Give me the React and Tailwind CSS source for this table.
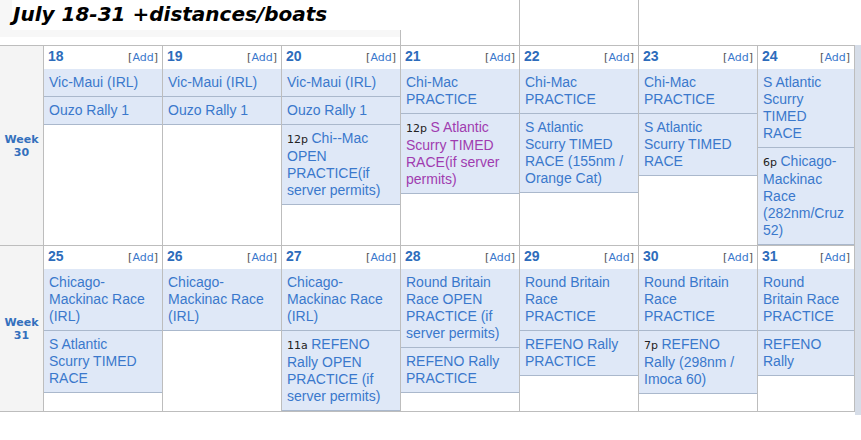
import React from "react";

const weeks = [
  {
    label: "30",
    days: [
      { d: "18", ev: [{ l: ["Vic-Maui (IRL)"] }, { l: ["Ouzo Rally 1"] }] },
      { d: "19", ev: [{ l: ["Vic-Maui (IRL)"] }, { l: ["Ouzo Rally 1"] }] },
      {
        d: "20",
        ev: [
          { l: ["Vic-Maui (IRL)"] },
          { l: ["Ouzo Rally 1"] },
          { t: "12p", l: ["Chi--Mac", "OPEN", "PRACTICE(if", "server permits)"] },
        ],
      },
      {
        d: "21",
        ev: [
          { l: ["Chi-Mac", "PRACTICE"] },
          { t: "12p", p: true, l: ["S Atlantic", "Scurry TIMED", "RACE(if server", "permits)"] },
        ],
      },
      {
        d: "22",
        ev: [
          { l: ["Chi-Mac", "PRACTICE"] },
          { l: ["S Atlantic", "Scurry TIMED", "RACE (155nm /", "Orange Cat)"] },
        ],
      },
      {
        d: "23",
        ev: [{ l: ["Chi-Mac", "PRACTICE"] }, { l: ["S Atlantic", "Scurry TIMED", "RACE"] }],
      },
      {
        d: "24",
        ev: [
          { l: ["S Atlantic", "Scurry", "TIMED", "RACE"] },
          { t: "6p", l: ["Chicago-", "Mackinac", "Race", "(282nm/Cruz", "52)"] },
        ],
      },
    ],
  },
  {
    label: "31",
    days: [
      {
        d: "25",
        ev: [
          { l: ["Chicago-", "Mackinac Race", "(IRL)"] },
          { l: ["S Atlantic", "Scurry TIMED", "RACE"] },
        ],
      },
      { d: "26", ev: [{ l: ["Chicago-", "Mackinac Race", "(IRL)"] }] },
      {
        d: "27",
        ev: [
          { l: ["Chicago-", "Mackinac Race", "(IRL)"] },
          { t: "11a", l: ["REFENO", "Rally OPEN", "PRACTICE (if", "server permits)"] },
        ],
      },
      {
        d: "28",
        ev: [
          { l: ["Round Britain", "Race OPEN", "PRACTICE (if", "server permits)"] },
          { l: ["REFENO Rally", "PRACTICE"] },
        ],
      },
      {
        d: "29",
        ev: [{ l: ["Round Britain", "Race", "PRACTICE"] }, { l: ["REFENO Rally", "PRACTICE"] }],
      },
      {
        d: "30",
        ev: [
          { l: ["Round Britain", "Race", "PRACTICE"] },
          { t: "7p", l: ["REFENO", "Rally (298nm /", "Imoca 60)"] },
        ],
      },
      {
        d: "31",
        ev: [{ l: ["Round", "Britain Race", "PRACTICE"] }, { l: ["REFENO", "Rally"] }],
      },
    ],
  },
];

function Event({ e }) {
  return (
    <div
      className={
        "px-[5px] pt-[5px] pb-[5px] border-b border-[#aab8cc] bg-[#dfe8f7] text-[14px] leading-[17px] whitespace-nowrap font-['Liberation_Sans',Arial,sans-serif] " +
        (e.p ? "text-[#a03cb0]" : "text-[#3a78cc]")
      }
    >
      {e.l.map((line, i) => (
        <div key={i}>
          {i === 0 && e.t ? (
            <span className="text-[11px] text-[#222] font-['DejaVu_Sans',Verdana,sans-serif]">
              {e.t}{" "}
            </span>
          ) : null}
          {line}
        </div>
      ))}
    </div>
  );
}

function Day({ day, last }) {
  return (
    <div className={"border-l border-[#bdbdbd] flex flex-col " + (last ? "border-r" : "")}>
      <div className="h-[23px] pl-[4px] pr-[4px] pt-[2px] flex items-baseline justify-between bg-white">
        <span className="text-[14px] leading-[17px] font-bold text-[#2d6cbb] font-['Liberation_Sans',Arial,sans-serif]">
          {day.d}
        </span>
        <span className="text-[11px] leading-[17px] text-[#555] font-['DejaVu_Sans',Verdana,sans-serif]">
          [<span className="text-[#3a78cc]">Add</span>]
        </span>
      </div>
      {day.ev.map((e, i) => (
        <Event key={i} e={e} />
      ))}
    </div>
  );
}

export default function App() {
  return (
    <div className="w-[861px] h-[440px] bg-white overflow-hidden">
      <div className="h-[45px] flex">
        <div className="w-[400px] h-[45px] flex flex-col">
          <div className="h-[37px] bg-[#f7f7f7] flex">
            <div className="ml-[12px] w-[388px] h-[30px] bg-white">
              <div className="pt-[3px] pl-[1px] text-[20px] leading-[22px] font-bold italic text-black font-['DejaVu_Sans',Verdana,sans-serif] whitespace-nowrap">
                July 18-31 +distances/boats
              </div>
            </div>
          </div>
        </div>
        <div className="w-[119px] flex flex-col">
          <div className="h-[30px]" />
          <div className="flex-1 border-l border-[#bdbdbd]" />
        </div>
        <div className="w-[119px] border-l border-[#bdbdbd]" />
        <div className="w-[119px] border-l border-[#bdbdbd]" />
      </div>
      <div className="flex">
        <div className="w-[855px] border-t border-[#bdbdbd]">
          {weeks.map((w) => (
            <div
              key={w.label}
              className="grid grid-cols-[43px_119px_119px_119px_119px_119px_119px_98px] border-b border-[#bdbdbd]"
            >
              <div className="bg-[#f4f4f4] flex items-center justify-center text-center text-[11px] leading-[13px] font-bold text-[#3470bd] font-['DejaVu_Sans',Verdana,sans-serif]">
                <div>
                  Week
                  <br />
                  {w.label}
                </div>
              </div>
              {w.days.map((d, i) => (
                <Day key={d.d} day={d} last={i === 6} />
              ))}
            </div>
          ))}
        </div>
        <div className="w-[6px] mb-[-3px] bg-[#d6dde8]" />
      </div>
    </div>
  );
}
